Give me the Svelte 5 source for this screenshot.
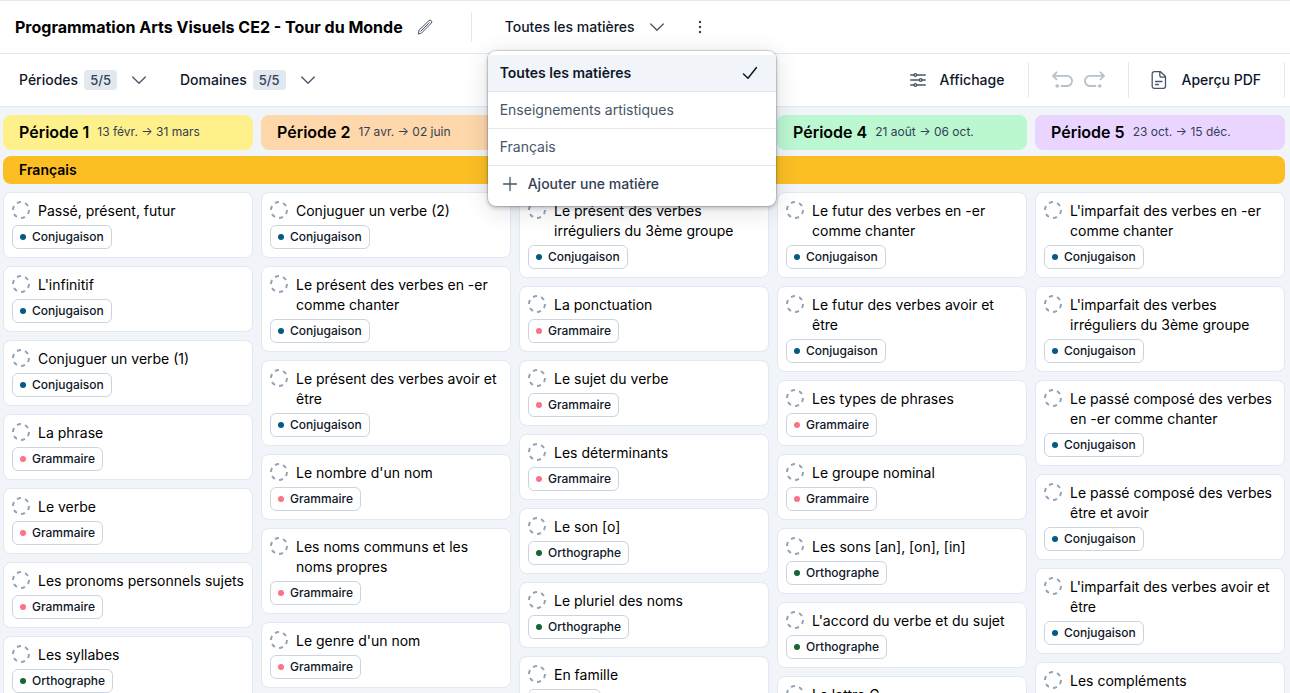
<script>
  const tags = {
    C: { label: 'Conjugaison', tone: 'blue' },
    G: { label: 'Grammaire', tone: 'rose' },
    O: { label: 'Orthographe', tone: 'green' },
    L: { label: 'Lexique', tone: 'amber' },
  };

  const periods = [
    {
      name: 'Période 1', dates: '13 févr. → 31 mars', tone: 'yellow',
      cards: [
        ['Passé, présent, futur', 'C'],
        ["L'infinitif", 'C'],
        ['Conjuguer un verbe (1)', 'C'],
        ['La phrase', 'G'],
        ['Le verbe', 'G'],
        ['Les pronoms personnels sujets', 'G'],
        ['Les syllabes', 'O'],
      ],
    },
    {
      name: 'Période 2', dates: '17 avr. → 02 juin', tone: 'orange',
      cards: [
        ['Conjuguer un verbe (2)', 'C'],
        ['Le présent des verbes en -er comme chanter', 'C'],
        ['Le présent des verbes avoir et être', 'C'],
        ["Le nombre d'un nom", 'G'],
        ['Les noms communs et les noms propres', 'G'],
        ["Le genre d'un nom", 'G'],
      ],
    },
    {
      name: 'Période 3', dates: '', tone: 'pink',
      cards: [
        ['Le présent des verbes irréguliers du 3ème groupe', 'C'],
        ['La ponctuation', 'G'],
        ['Le sujet du verbe', 'G'],
        ['Les déterminants', 'G'],
        ['Le son [o]', 'O'],
        ['Le pluriel des noms', 'O'],
        ['En famille', 'L'],
      ],
    },
    {
      name: 'Période 4', dates: '21 août → 06 oct.', tone: 'green',
      cards: [
        ['Le futur des verbes en -er comme chanter', 'C'],
        ['Le futur des verbes avoir et être', 'C'],
        ['Les types de phrases', 'G'],
        ['Le groupe nominal', 'G'],
        ['Les sons [an], [on], [in]', 'O'],
        ["L'accord du verbe et du sujet", 'O'],
        ['La lettre G', 'O'],
      ],
    },
    {
      name: 'Période 5', dates: '23 oct. → 15 déc.', tone: 'purple',
      cards: [
        ["L'imparfait des verbes en -er comme chanter", 'C'],
        ["L'imparfait des verbes irréguliers du 3ème groupe", 'C'],
        ['Le passé composé des verbes en -er comme chanter', 'C'],
        ['Le passé composé des verbes être et avoir', 'C'],
        ["L'imparfait des verbes avoir et être", 'C'],
        ['Les compléments', 'G'],
      ],
    },
  ];

  const subjects = ['Toutes les matières', 'Enseignements artistiques', 'Français'];
  const filters = ['Périodes', 'Domaines'];
  let selected = $state('Toutes les matières');
  let open = $state(true);
</script>

{#snippet chevron()}
  <svg class="chevron" width="16" height="16" viewBox="0 0 16 16" aria-hidden="true">
    <path d="M1.700 5 8 11.300 14.300 5" />
  </svg>
{/snippet}

<div class="page">
  <header class="topbar">
    <h1>Programmation Arts Visuels CE2 - Tour du Monde</h1>
    <button class="edit" aria-label="Modifier le titre">
      <svg width="16" height="16" viewBox="0 0 16 16" aria-hidden="true">
        <path d="M1.300 14.700 2.200 11 11.900 1.700a1.600 1.600 0 0 1 2.400 2.400L4.800 13.800zM3.800 12.200 12.200 3.900" />
      </svg>
    </button>
    <div class="subject">
      <button class="trigger" aria-haspopup="menu" aria-expanded={open} onclick={() => (open = !open)}>
        {selected}
        {@render chevron()}
      </button>
      {#if open}
        <div class="menu" role="menu">
          {#each subjects as subject}
            <button role="menuitem" class:active={subject === selected} onclick={() => (selected = subject)}>
              {subject}
              {#if subject === selected}
                <svg class="check" width="16" height="16" viewBox="0 0 16 16" aria-hidden="true">
                  <path d="M1.500 9 6 13.200 14.500 2.500" />
                </svg>
              {/if}
            </button>
          {/each}
          <button role="menuitem" class="add">
            <svg width="20" height="20" viewBox="0 0 20 20" aria-hidden="true">
              <path d="M10 3.500v13M3.500 10h13" />
            </svg>
            Ajouter une matière
          </button>
        </div>
      {/if}
    </div>
    <button class="more" aria-label="Plus d'options">
      <svg width="16" height="16" viewBox="0 0 16 16" aria-hidden="true">
        <circle cx="8" cy="3" r="1.200" /><circle cx="8" cy="8" r="1.200" /><circle cx="8" cy="13" r="1.200" />
      </svg>
    </button>
  </header>

  <div class="toolbar">
    <div class="filters">
      {#each filters as filter}
        <button class="filter">
          {filter}<span class="count">5/5</span>
          {@render chevron()}
        </button>
      {/each}
    </div>
    <div class="group display">
      <button class="tool">
        <svg width="16" height="16" viewBox="0 0 16 16" aria-hidden="true">
          <path d="M.7 3H4M6.600 3h8.700M.7 8h8.700M12 8h3.300M.7 13H4M6.600 13h8.700" />
          <circle cx="5.300" cy="3" r="1.300" /><circle cx="10.700" cy="8" r="1.300" /><circle cx="5.300" cy="13" r="1.300" />
        </svg>
        Affichage
      </button>
    </div>
    <div class="group history">
      <button aria-label="Annuler" disabled>
        <svg width="22" height="20" viewBox="0 0 22 20" aria-hidden="true">
          <path d="M5.500 2.300 2 5.800 5.500 9.300M2 5.800h14a4.800 4.800 0 0 1 0 10.200H10.500" />
          <circle cx="6.200" cy="16" r="1.800" />
        </svg>
      </button>
      <button aria-label="Rétablir" disabled>
        <svg width="22" height="20" viewBox="0 0 22 20" aria-hidden="true">
          <path d="M16.500 2.300 20 5.800 16.500 9.300M20 5.800H6a4.800 4.800 0 0 0 0 10.200H11.500" />
          <circle cx="15.800" cy="16" r="1.800" />
        </svg>
      </button>
    </div>
    <div class="group pdf">
      <button class="tool">
        <svg width="16" height="20" viewBox="0 0 16 20" aria-hidden="true">
          <path d="M3.200 1.700h6.300L14.500 6.500v9.800a2 2 0 0 1-2 2h-9.300a2 2 0 0 1-2-2V3.700a2 2 0 0 1 2-2zM8.800 1.900v3.300a2 2 0 0 0 2 2h3.400M4.500 11.500h6.500M4.500 14.500h3" />
        </svg>
        Aperçu PDF
      </button>
    </div>
  </div>

  <main class="board">
    <div class="columns">
      {#each periods as period}
        <div class="period {period.tone}">
          <h2>{period.name}</h2>
          <span>{period.dates}</span>
        </div>
      {/each}
    </div>
    <h3 class="band">Français</h3>
    <div class="columns">
      {#each periods as period}
        <div class="stack">
          {#each period.cards as [title, tag]}
            <article class="card">
              <div class="line">
                <svg class="ring" width="18" height="18" viewBox="0 0 18 18" aria-hidden="true">
                  <circle cx="9" cy="9" r="8" pathLength="60" />
                </svg>
                <p>{title}</p>
              </div>
              <span class="tag"><i class={tags[tag].tone}></i>{tags[tag].label}</span>
            </article>
          {/each}
        </div>
      {/each}
    </div>
  </main>
</div>

<style>
  :global(body) {
    margin: 0;
    background: #f1f5f9;
  }
  .page {
    height: 100vh;
    display: flex;
    flex-direction: column;
    overflow: hidden;
    box-sizing: border-box;
    border-top: 1px solid #e2e8f0;
    background: #f1f5f9;
    font-family: Inter, "Liberation Sans", sans-serif;
    font-size: 14px;
    line-height: 20px;
    color: #0f172a;
  }
  h1, h2, h3, p {
    margin: 0;
  }
  button {
    display: flex;
    align-items: center;
    padding: 0;
    border: 0;
    background: none;
    font: inherit;
    color: inherit;
    cursor: pointer;
  }
  svg {
    flex: none;
    fill: none;
    stroke: #475569;
    stroke-width: 1.3;
    stroke-linecap: round;
    stroke-linejoin: round;
  }
  .topbar, .toolbar {
    display: flex;
    align-items: center;
    flex: none;
    height: 52px;
    background: #fff;
    border-bottom: 1px solid #e2e8f0;
  }
  .topbar {
    padding-left: 15px;
  }
  h1 {
    font-size: 16px;
    line-height: 24px;
    font-weight: 700;
    color: #000;
    white-space: nowrap;
  }
  .edit {
    margin-left: 14px;
    margin-right: 38px;
  }
  .edit svg {
    stroke-width: 1;
  }
  .subject {
    position: relative;
    display: flex;
    align-items: center;
    height: 30px;
    padding-left: 33px;
    border-left: 1px solid #e2e8f0;
    font-weight: 500;
  }
  .trigger {
    gap: 14px;
    white-space: nowrap;
  }
  .more {
    margin-left: 27px;
  }
  .more svg {
    fill: #334155;
    stroke: none;
  }
  .menu {
    position: absolute;
    z-index: 2;
    top: 39px;
    left: 16px;
    width: 288px;
    padding: 4px 0;
    border-radius: 8px;
    background: #fff;
    box-shadow: 0 0 1px 1px rgb(15 23 42 / 0.16), 0 2px 4px rgb(15 23 42 / 0.22), 0 4px 24px rgb(15 23 42 / 0.14);
    color: #475569;
    font-weight: 400;
  }
  .menu button {
    width: 100%;
    height: 37px;
    padding: 0 18px 0 12px;
    justify-content: space-between;
    border-bottom: 1px solid #e2e8f0;
  }
  .menu .active {
    background: #f1f5f9;
    color: #0f172a;
    font-weight: 600;
  }
  .menu .add {
    height: 36px;
    justify-content: flex-start;
    gap: 8px;
    border-bottom: 0;
    color: #334155;
    font-weight: 500;
  }
  .check {
    stroke: #0f172a;
    stroke-width: 1.5;
  }
  .filters {
    display: flex;
    flex: 1;
    gap: 33px;
    padding-left: 19px;
    font-weight: 500;
  }
  .count {
    margin: 0 14px 0 6px;
    padding: 0 6px;
    border-radius: 4px;
    background: #e2e8f0;
    font-size: 13px;
    color: #334155;
  }
  .group {
    display: flex;
    align-items: center;
    height: 36px;
    border-right: 1px solid #e2e8f0;
    font-weight: 500;
  }
  .display {
    padding-right: 24px;
  }
  .tool {
    gap: 14px;
  }
  .history {
    gap: 11px;
    padding: 0 22px;
  }
  .history svg {
    stroke: #b6c0cd;
    stroke-width: 1.8;
  }
  .history circle {
    fill: #b6c0cd;
    stroke: none;
  }
  .pdf {
    padding: 0 23px 0 22px;
    margin-right: 5px;
  }
  .board {
    flex: 1;
    min-height: 0;
    overflow: hidden;
    padding: 8px 5px 0 3px;
  }
  .columns {
    display: grid;
    grid-template-columns: repeat(5, minmax(0, 1fr));
    gap: 8px;
  }
  .period {
    display: flex;
    align-items: center;
    gap: 8px;
    box-sizing: border-box;
    height: 35px;
    padding: 0 0 1px 16px;
    border-radius: 8px;
    font-size: 12px;
    color: #334155;
    white-space: nowrap;
  }
  .period.yellow { background: #fef08a; }
  .period.orange { background: #fed7aa; }
  .period.pink { background: #fecdd3; }
  .period.green { background: #bbf7d0; }
  .period.purple { background: #e9d5ff; }
  h2 {
    font-size: 16px;
    font-weight: 600;
    color: #000;
  }
  .band {
    margin: 6px 0 8px;
    padding: 4px 16px;
    border-radius: 8px;
    background: #fbbf24;
    font-size: 14px;
    font-weight: 600;
    color: #000;
  }
  .stack {
    display: flex;
    flex-direction: column;
    gap: 8px;
  }
  .card {
    display: flex;
    flex-direction: column;
    align-items: flex-start;
    gap: 4px;
    padding: 8px;
    border: 1px solid #e2e8f0;
    border-radius: 8px;
    background: #fff;
    color: #000;
  }
  .line {
    display: flex;
    gap: 8px;
  }
  .ring {
    stroke: #94a3b8;
    stroke-width: 2;
    stroke-linecap: butt;
    stroke-dasharray: 5 5;
  }
  .tag {
    display: flex;
    align-items: center;
    gap: 6px;
    box-sizing: border-box;
    height: 24px;
    padding: 0 7px;
    border: 1px solid #cbd5e1;
    border-radius: 6px;
    font-size: 12px;
    font-weight: 500;
    color: #0f172a;
  }
  .tag i {
    width: 6px;
    height: 6px;
    border-radius: 50%;
  }
  .tag .blue { background: #075985; }
  .tag .rose { background: #fb7185; }
  .tag .green { background: #166534; }
  .tag .amber { background: #f59e0b; }
</style>
